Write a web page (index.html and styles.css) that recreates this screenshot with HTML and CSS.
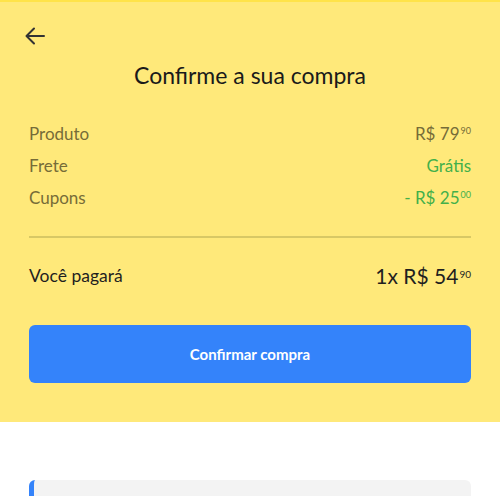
FILE: index.html
```html
<!DOCTYPE html>
<html lang="pt-BR">
<head>
<meta charset="utf-8">
<link rel="stylesheet" href="styles.css">
</head>
<body>
<div class="top">
  <div class="header">
    <svg class="back" width="22" height="18" viewBox="0 0 22 18" aria-hidden="true">
      <path d="M20 9H3M10 1.5L2.5 9L10 16.5" fill="none" stroke="#333" stroke-width="2" stroke-linecap="round" stroke-linejoin="round"/>
    </svg>
  </div>
  <h1 class="title">Confirme a sua compra</h1>
  <div class="rows">
    <div class="row"><span>Produto</span><span class="amt">R$ 79<sup>90</sup></span></div>
    <div class="row"><span>Frete</span><span class="amt green">Grátis</span></div>
    <div class="row"><span>Cupons</span><span class="amt green">- R$ 25<sup>00</sup></span></div>
  </div>
  <div class="divider"></div>
  <div class="total"><span>Você pagará</span><span class="price">1x R$ 54<sup>90</sup></span></div>
  <button class="confirm">Confirmar compra</button>
</div>
<div class="bottom">
  <div class="card"></div>
</div>
</body>
</html>
```
FILE: styles.css
```css
html, body { margin: 0; padding: 0; }
body {
  background: #fff;
  font-family: "Lato", "Open Sans", sans-serif;
  width: 500px;
  height: 496px;
  overflow: hidden;
}
.top {
  background: #ffe97a;
  border-top: 2px solid #ffe34a;
  padding: 0 29px 39px;
}
.header {
  height: 58px;
  display: flex;
  align-items: center;
}
.back { margin-left: -5px; margin-top: 10px; display: block; }
.title {
  margin: 0;
  font-size: 23px;
  font-weight: 400;
  color: #1a1a1a;
  text-align: center;
  line-height: 30px;
}
.rows { margin-top: 28px; }
.row {
  display: flex;
  justify-content: space-between;
  line-height: 32px;
  font-size: 17px;
  color: #766c38;
}
.green { color: #43b04a; }
sup {
  font-size: 9px;
  vertical-align: top;
  line-height: 1;
  position: relative;
  top: 8px;
  margin-left: 1px;
}
.divider {
  margin-top: 22px;
  height: 2px;
  background: #d8c865;
}
.total {
  margin-top: 22px;
  display: flex;
  justify-content: space-between;
  align-items: center;
  line-height: 32px;
  font-size: 17.5px;
  color: #1f1f1f;
}
.price { font-size: 21px; }
.price sup { font-size: 10px; top: 9px; }
.confirm {
  display: block;
  width: 100%;
  margin-top: 33px;
  height: 58px;
  border: 0;
  border-radius: 6px;
  background: #3483fa;
  color: #fff;
  font-family: inherit;
  font-size: 15px;
  font-weight: 700;
}
.bottom { padding: 58px 29px 0; }
.card {
  height: 16px;
  background: #f3f3f3;
  border-radius: 6px 6px 0 0;
  border-left: 5px solid #3483fa;
}
```
